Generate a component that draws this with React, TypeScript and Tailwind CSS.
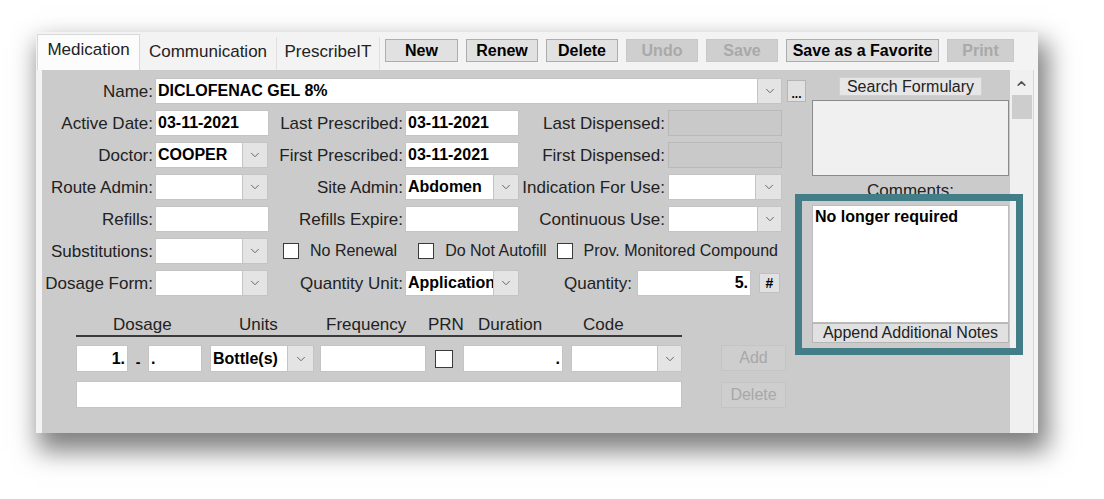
import React from 'react';
import { ChevronDown, ChevronUp } from 'lucide-react';

type BoxProps = { w: string; value?: string; right?: boolean };

function Label({ text, w, pr = 'pr-[2px]' }: { text: string; w: string; pr?: string }) {
  return (
    <div className={`${w} ${pr} shrink-0 text-right whitespace-nowrap text-[17px] leading-none text-[#222]`}>{text}</div>
  );
}

function TextBox({ w, value, right }: BoxProps) {
  return (
    <div
      className={`${w} h-full shrink-0 bg-white border border-[#c4c4c4] flex items-center px-[2px] overflow-hidden ${right ? 'justify-end' : ''}`}
    >
      <span className="text-[16px] font-bold text-black leading-none whitespace-nowrap">{value}</span>
    </div>
  );
}

function DisabledBox({ w }: { w: string }) {
  return <div className={`${w} h-full shrink-0 bg-[#c9c9c9] border border-[#b9b9b9]`} />;
}

function Combo({ w, value, drop = 'w-[25px]' }: BoxProps & { drop?: string }) {
  return (
    <div className={`${w} h-full shrink-0 flex`}>
      <div className="flex-1 bg-white border border-[#c4c4c4] flex items-center px-[2px] overflow-hidden">
        <span className="text-[16px] font-bold text-black leading-none whitespace-nowrap">{value}</span>
      </div>
      <div className={`${drop} bg-[#e4e4e4] border border-[#c4c4c4] border-l-0 flex items-center justify-center`}>
        <ChevronDown size={14} strokeWidth={1.6} className="text-[#5e5e5e]" />
      </div>
    </div>
  );
}

function Check({ size = 'w-[16px] h-[16px]' }: { size?: string }) {
  return <div className={`${size} shrink-0 bg-white border-[1.5px] border-[#3a3a3a]`} />;
}

function ToolButton({ label, w, disabled }: { label: string; w: string; disabled?: boolean }) {
  return (
    <div
      className={`${w} h-[23px] shrink-0 flex items-center justify-center text-[16px] font-bold leading-none border ${
        disabled ? 'bg-[#cfcfcf] border-[#c8c8c8] text-[#a9a9a9]' : 'bg-[#e1e1e1] border-[#adadad] text-black'
      }`}
    >
      {label}
    </div>
  );
}

export default function App() {
  return (
    <div className="w-[1104px] h-[499px] bg-white pl-[36px] pt-[32px] font-['Liberation_Sans',Arial,sans-serif] overflow-hidden">
      <div className="relative w-[1002px] h-[401px] bg-[#f3f3f3] shadow-[6px_14px_24px_4px_rgba(0,0,0,0.5)] flex flex-col">
        {/* tabs + toolbar */}
        <div className="h-[38px] flex items-start">
          <div className="self-end flex items-end ml-[1px]">
            <div className="w-[103px] h-[36px] pb-[5px] bg-[#fcfcfc] border border-b-0 border-[#d8d8d8] flex items-center justify-center text-[17px] text-[#222]">
              Medication
            </div>
            <div className="w-[137px] h-[33px] pb-[3px] border-r border-[#e0e0e0] flex items-center justify-center text-[17px] text-[#222]">
              Communication
            </div>
            <div className="w-[103px] h-[33px] pb-[3px] border-r border-[#e0e0e0] flex items-center justify-center text-[17px] text-[#222]">
              PrescribeIT
            </div>
          </div>
          <div className="flex gap-[8px] mt-[7px] ml-[5px]">
            <ToolButton label="New" w="w-[73px]" />
            <ToolButton label="Renew" w="w-[72px]" />
            <ToolButton label="Delete" w="w-[72px]" />
            <ToolButton label="Undo" w="w-[72px]" disabled />
            <ToolButton label="Save" w="w-[72px]" disabled />
            <ToolButton label="Save as a Favorite" w="w-[153px]" />
            <ToolButton label="Print" w="w-[67px]" disabled />
          </div>
        </div>

        {/* body */}
        <div className="flex-1 flex">
          <div className="w-[6px]" />
          <div className="w-[968px] bg-[#cbcbcb] flex">
            {/* form */}
            <div className="w-[766px] pt-[8px] flex flex-col">
              <div className="flex flex-col gap-[6px]">
                <div className="flex items-center h-[26px]">
                  <Label text="Name:" w="w-[113px]" />
                  <Combo w="w-[627px]" value="DICLOFENAC GEL 8%" drop="w-[24px]" />
                  <div className="ml-[5px] w-[19px] h-[22px] bg-[#e1e1e1] border border-[#b5b5b5] flex items-end justify-center text-[12px] font-bold leading-[14px]">
                    ...
                  </div>
                </div>
                <div className="flex items-center h-[26px]">
                  <Label text="Active Date:" w="w-[113px]" />
                  <TextBox w="w-[114px]" value="03-11-2021" />
                  <Label text="Last Prescribed:" w="w-[136px]" />
                  <TextBox w="w-[114px]" value="03-11-2021" />
                  <Label text="Last Dispensed:" w="w-[149px]" pr="pr-[3px]" />
                  <DisabledBox w="w-[114px]" />
                </div>
                <div className="flex items-center h-[26px]">
                  <Label text="Doctor:" w="w-[113px]" />
                  <Combo w="w-[113px]" value="COOPER" />
                  <Label text="First Prescribed:" w="w-[137px]" />
                  <TextBox w="w-[114px]" value="03-11-2021" />
                  <Label text="First Dispensed:" w="w-[149px]" pr="pr-[3px]" />
                  <DisabledBox w="w-[114px]" />
                </div>
                <div className="flex items-center h-[26px]">
                  <Label text="Route Admin:" w="w-[113px]" />
                  <Combo w="w-[113px]" />
                  <Label text="Site Admin:" w="w-[137px]" />
                  <Combo w="w-[114px]" value="Abdomen" />
                  <Label text="Indication For Use:" w="w-[149px]" pr="pr-[3px]" />
                  <Combo w="w-[114px]" drop="w-[26px]" />
                </div>
                <div className="flex items-center h-[26px]">
                  <Label text="Refills:" w="w-[113px]" />
                  <TextBox w="w-[114px]" />
                  <Label text="Refills Expire:" w="w-[136px]" />
                  <TextBox w="w-[114px]" />
                  <Label text="Continuous Use:" w="w-[149px]" pr="pr-[3px]" />
                  <Combo w="w-[114px]" drop="w-[24px]" />
                </div>
                <div className="flex items-center h-[26px]">
                  <Label text="Substitutions:" w="w-[113px]" />
                  <Combo w="w-[113px]" />
                  <div className="ml-[15px]"><Check /></div>
                  <span className="ml-[11px] text-[16px] text-[#222] whitespace-nowrap">No Renewal</span>
                  <div className="ml-[21px]"><Check /></div>
                  <span className="ml-[11px] text-[16px] text-[#222] whitespace-nowrap">Do Not Autofill</span>
                  <div className="ml-[10px]"><Check /></div>
                  <span className="ml-[11px] text-[16px] text-[#222] whitespace-nowrap">Prov. Monitored Compound</span>
                </div>
                <div className="flex items-center h-[26px]">
                  <Label text="Dosage Form:" w="w-[113px]" />
                  <Combo w="w-[113px]" />
                  <Label text="Quantity Unit:" w="w-[137px]" />
                  <Combo w="w-[114px]" value="Application" />
                  <Label text="Quantity:" w="w-[118px]" pr="pr-[5px]" />
                  <TextBox w="w-[114px]" value="5." right />
                  <div className="ml-[8px] w-[21px] h-[20px] bg-[#e1e1e1] border border-[#c0c0c0] flex items-center justify-center text-[14px] font-bold">
                    #
                  </div>
                </div>
              </div>

              {/* dosage grid */}
              <div className="mt-[17px] ml-[34px] flex">
                <div className="w-[606px] flex flex-col">
                  <div className="h-[24px] border-b-2 border-[#3a3a3a] flex items-center text-[17px] text-[#222] leading-none">
                    <span className="w-[163px] pl-[37px]">Dosage</span>
                    <span className="w-[87px]">Units</span>
                    <span className="w-[102px]">Frequency</span>
                    <span className="w-[50px]">PRN</span>
                    <span className="w-[105px]">Duration</span>
                    <span>Code</span>
                  </div>
                  <div className="mt-[8px] h-[27px] flex items-center">
                    <TextBox w="w-[52px]" value="1." right />
                    <span className="w-[20px] pt-[6px] text-center text-[14px] font-bold leading-none">-</span>
                    <TextBox w="w-[54px]" value="." />
                    <div className="ml-[8px] h-full flex">
                      <Combo w="w-[104px]" value="Bottle(s)" drop="w-[26px]" />
                    </div>
                    <div className="ml-[6px] h-full flex">
                      <TextBox w="w-[106px]" />
                    </div>
                    <div className="ml-[9px]"><Check size="w-[18px] h-[18px]" /></div>
                    <div className="ml-[10px] h-full flex">
                      <TextBox w="w-[100px]" value="." right />
                    </div>
                    <div className="ml-[8px] h-full flex">
                      <Combo w="w-[111px]" drop="w-[24px]" />
                    </div>
                  </div>
                  <div className="mt-[9px] h-[27px] flex">
                    <TextBox w="w-[606px]" />
                  </div>
                </div>
                <div className="ml-[39px] pt-[32px] flex flex-col">
                  <div className="w-[65px] h-[26px] border border-[#c4c4c4] bg-[#cecece] flex items-center justify-center text-[16px] text-[#a8a8a8]">
                    Add
                  </div>
                  <div className="mt-[11px] w-[65px] h-[26px] border border-[#c4c4c4] bg-[#cecece] flex items-center justify-center text-[16px] text-[#a8a8a8]">
                    Delete
                  </div>
                </div>
              </div>
            </div>

            {/* right column */}
            <div className="ml-[4px] w-[197px] pt-[7px] flex flex-col">
              <div className="self-center w-[143px] h-[19px] bg-[#e6e6e6] border border-[#d0d0d0] flex items-center justify-center text-[16px] text-[#222] leading-none">
                Search Formulary
              </div>
              <div className="mt-[4px] h-[76px] bg-[#f0f0f0] border border-[#8a8a8a]" />
              <div className="h-[29px] flex items-center justify-center text-[17px] text-[#222] leading-none">Comments:</div>
              <div className="h-[118px] bg-white border border-[#bdbdbd] px-[2px] pt-[3px] text-[16px] font-bold text-black leading-none">
                No longer required
              </div>
              <div className="h-[20px] bg-[#e1e1e1] border border-[#b5b5b5] flex items-center justify-center text-[16px] text-[#222] leading-none">
                Append Additional Notes
              </div>
            </div>
          </div>

          {/* scrollbar */}
          <div className="w-[23px] bg-[#f0f0f0] flex flex-col items-center">
            <ChevronUp size={13} strokeWidth={3} className="mt-[7px] text-[#555]" />
            <div className="mt-[5px] w-[20px] h-[24px] bg-[#cdcdcd]" />
          </div>
          <div className="w-[5px] border-l border-[#d6d6d6]" />
        </div>

        {/* highlight */}
        <div className="absolute left-[759px] top-[162px] w-[228px] h-[161px] border-[7px] border-[#437d88] pointer-events-none" />
      </div>
    </div>
  );
}
